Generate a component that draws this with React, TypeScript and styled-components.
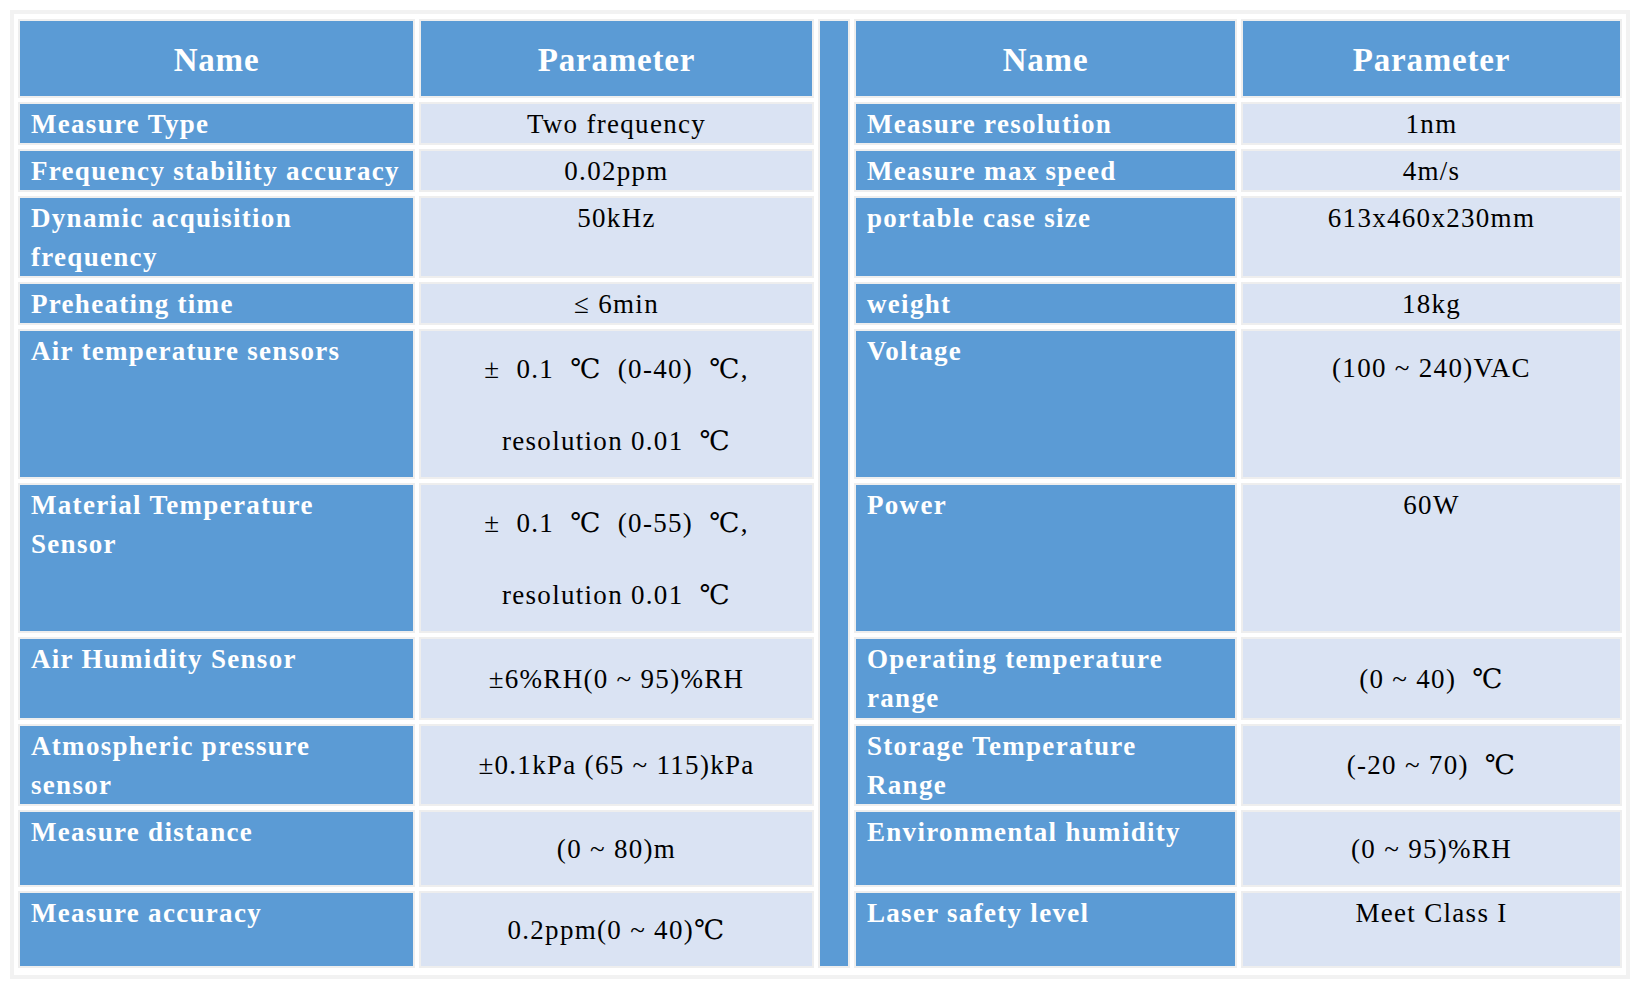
import React from "react";
import styled, { createGlobalStyle } from "styled-components";

const GlobalStyle = createGlobalStyle`
  html, body {
    margin: 0;
    padding: 0;
    background: #ffffff;
  }
  body {
    font-family: "Liberation Serif", "DejaVu Serif", "Noto Sans CJK SC", serif;
  }
`;

const BLUE = "#5b9bd5";
const LIGHT = "#dae3f3";
const EDGE = "#eeeeee";

const Page = styled.div`
  padding: 10px 0 0 10px;
`;

const Sheet = styled.div`
  display: grid;
  width: max-content;
  grid-template-columns: 397px 395px 32px 383px 381px;
  grid-template-rows: 79px 43px 43px 82px 43px 150px 150px 83px 82px 77px 77px;
  gap: 4px;
  padding: 5px 4px 7px 4px;
  border: 4px solid #f2f2f2;
`;

const Cell = styled.div`
  box-sizing: border-box;
  border: 2px solid ${EDGE};
`;

const HeadCell = styled(Cell)`
  background: ${BLUE};
  color: #ffffff;
  font-weight: 700;
  font-size: 33px;
  letter-spacing: 0.8px;
  display: flex;
  align-items: center;
  justify-content: center;
  padding-top: 3px;
`;

const Divider = styled(Cell)`
  grid-column: 3;
  grid-row: 1 / -1;
  background: ${BLUE};
`;

// names keep the line breaks of the source sheet
const NameCell = styled(Cell)`
  background: ${BLUE};
  color: #ffffff;
  font-weight: 700;
  font-size: 27px;
  letter-spacing: 1.3px;
  line-height: 38.5px;
  padding: 1px 4px 0 11px;
  white-space: pre-line;
`;

type Align = "top" | "middle";

const ValueCell = styled(Cell)<{ $align: Align; $loose?: boolean }>`
  background: ${LIGHT};
  color: #000000;
  font-size: 27px;
  letter-spacing: 1.3px;
  line-height: ${({ $loose }) => ($loose ? "72px" : "38.5px")};
  padding-top: 1px;
  display: flex;
  flex-direction: column;
  align-items: center;
  justify-content: ${({ $align }) => ($align === "top" ? "flex-start" : "center")};
  text-align: center;
  white-space: pre;
`;

interface Entry {
  name: string;
  value: string[];
  align: Align;
  loose?: boolean;
}

interface Row {
  left: Entry;
  right: Entry;
}

const rows: Row[] = [
  {
    left: { name: "Measure Type", value: ["Two frequency"], align: "middle" },
    right: { name: "Measure resolution", value: ["1nm"], align: "middle" },
  },
  {
    left: { name: "Frequency stability accuracy", value: ["0.02ppm"], align: "middle" },
    right: { name: "Measure max speed", value: ["4m/s"], align: "middle" },
  },
  {
    left: { name: "Dynamic acquisition\nfrequency", value: ["50kHz"], align: "top" },
    right: { name: "portable case size", value: ["613x460x230mm"], align: "top" },
  },
  {
    left: { name: "Preheating time", value: ["≤ 6min"], align: "middle" },
    right: { name: "weight", value: ["18kg"], align: "middle" },
  },
  {
    left: {
      name: "Air temperature sensors",
      value: ["±  0.1  ℃  (0-40)  ℃,", "resolution 0.01  ℃"],
      align: "middle",
      loose: true,
    },
    right: { name: "Voltage", value: ["(100 ~ 240)VAC"], align: "top", loose: true },
  },
  {
    left: {
      name: "Material Temperature\nSensor",
      value: ["±  0.1  ℃  (0-55)  ℃,", "resolution 0.01  ℃"],
      align: "middle",
      loose: true,
    },
    right: { name: "Power", value: ["60W"], align: "top" },
  },
  {
    left: { name: "Air Humidity Sensor", value: ["±6%RH(0 ~ 95)%RH"], align: "middle" },
    right: { name: "Operating temperature\nrange", value: ["(0 ~ 40)  ℃"], align: "middle" },
  },
  {
    left: { name: "Atmospheric pressure\nsensor", value: ["±0.1kPa (65 ~ 115)kPa"], align: "middle" },
    right: { name: "Storage Temperature\nRange", value: ["(-20 ~ 70)  ℃"], align: "middle" },
  },
  {
    left: { name: "Measure distance", value: ["(0 ~ 80)m"], align: "middle" },
    right: { name: "Environmental humidity", value: ["(0 ~ 95)%RH"], align: "middle" },
  },
  {
    left: { name: "Measure accuracy", value: ["0.2ppm(0 ~ 40)℃"], align: "middle" },
    right: { name: "Laser safety level", value: ["Meet Class I"], align: "top" },
  },
];

const renderEntry = (e: Entry, key: string) => [
  <NameCell key={`${key}-n`}>{e.name}</NameCell>,
  <ValueCell key={`${key}-v`} $align={e.align} $loose={e.loose}>
    {e.value.map((line, i) => (
      <span key={i}>{line}</span>
    ))}
  </ValueCell>,
];

const App = () => (
  <Page>
    <GlobalStyle />
    <Sheet>
      <Divider />
      <HeadCell>Name</HeadCell>
      <HeadCell>Parameter</HeadCell>
      <HeadCell>Name</HeadCell>
      <HeadCell>Parameter</HeadCell>
      {rows.map((r, i) => [
        ...renderEntry(r.left, `l${i}`),
        ...renderEntry(r.right, `r${i}`),
      ])}
    </Sheet>
  </Page>
);

export default App;
